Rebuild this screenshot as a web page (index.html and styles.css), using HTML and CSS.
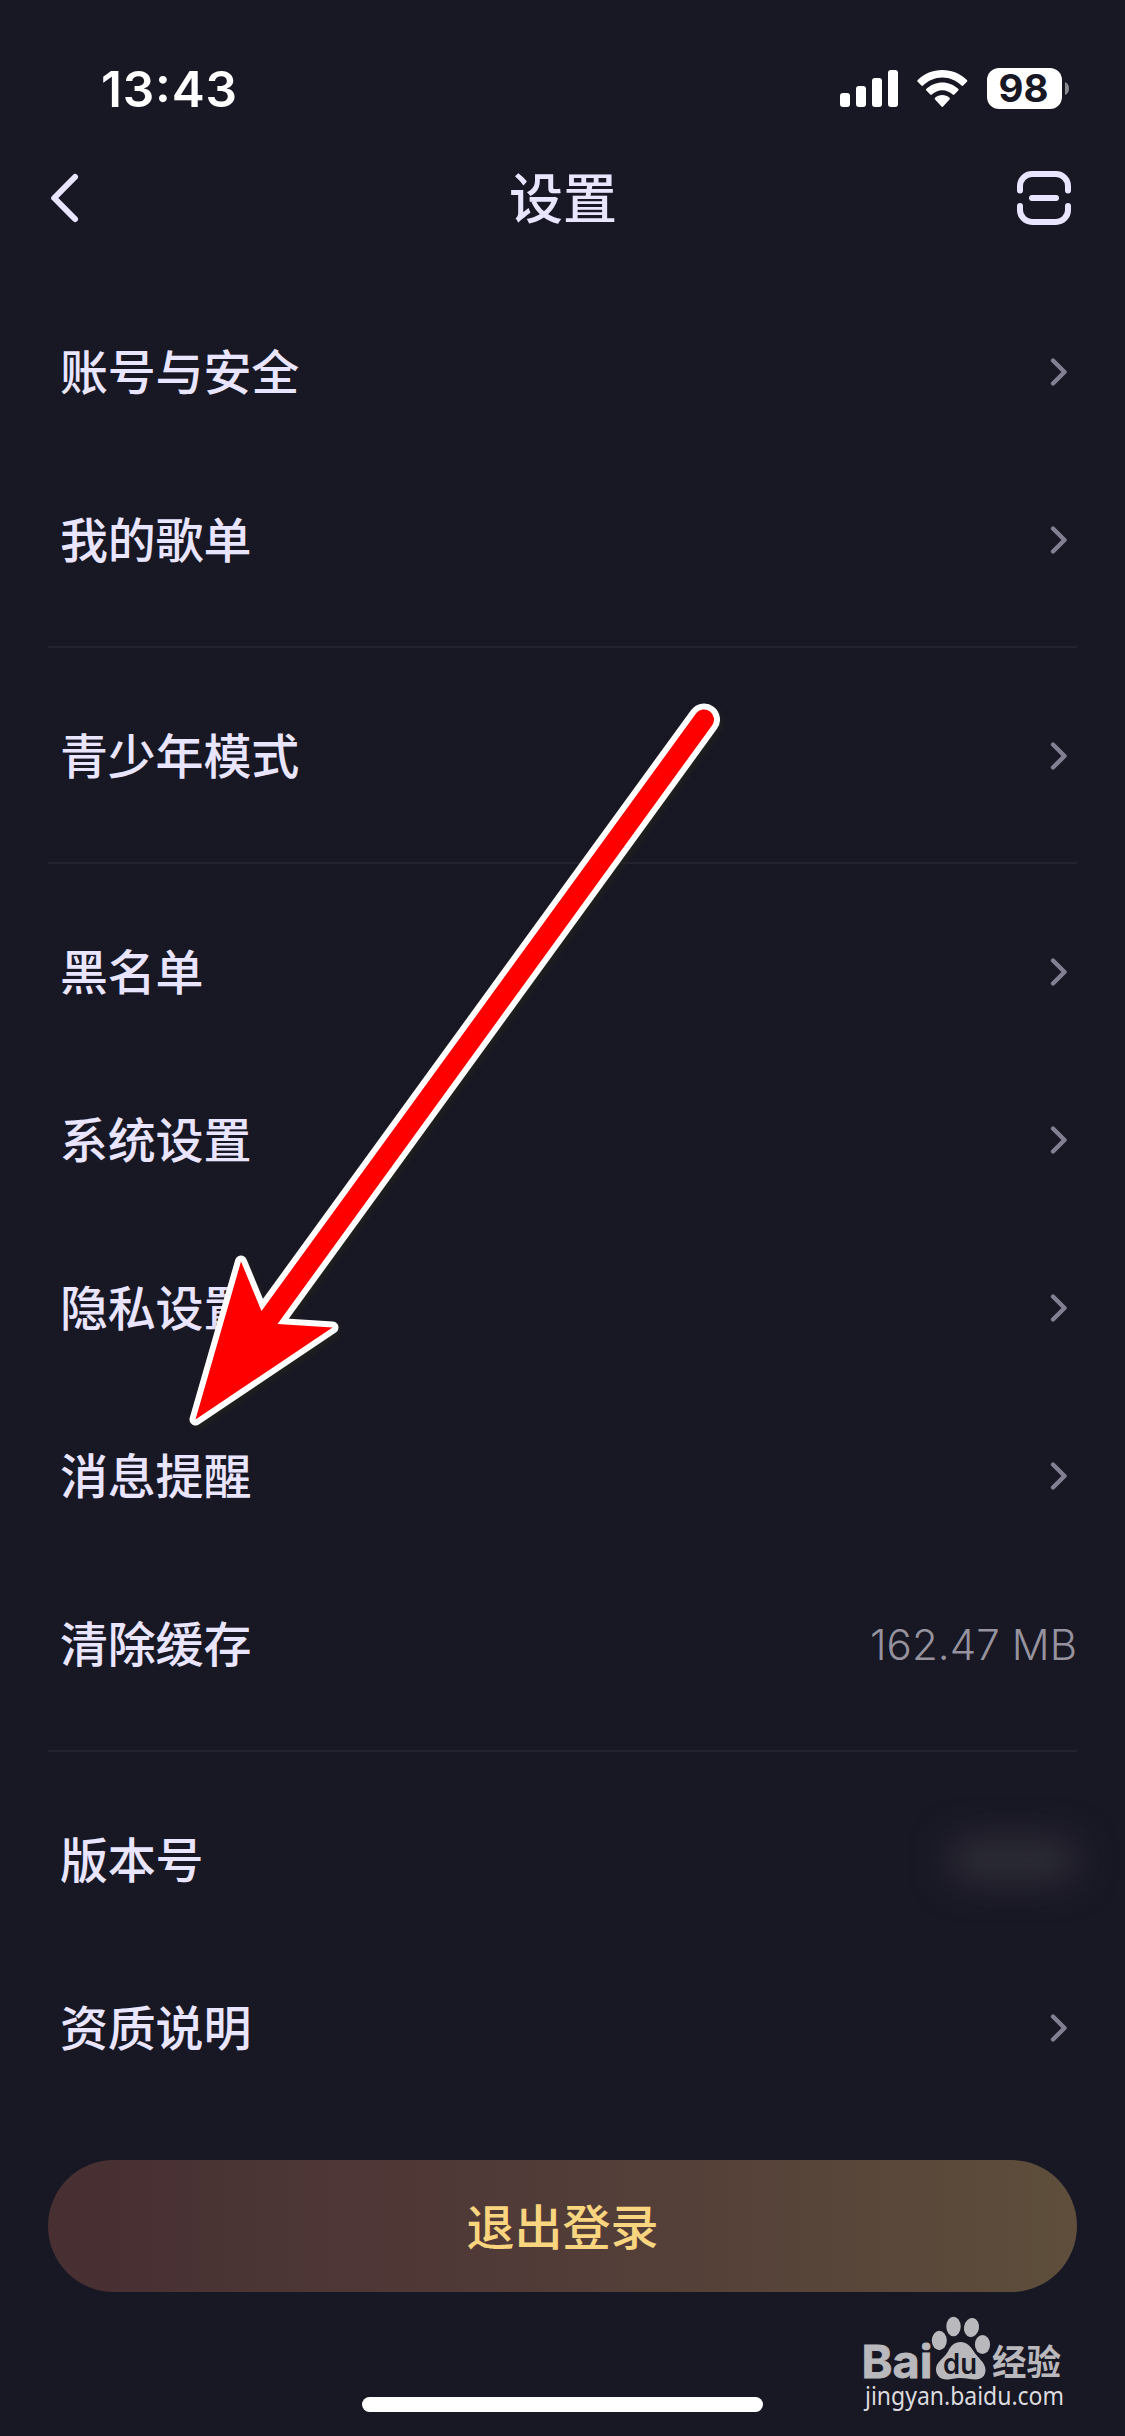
FILE: index.html
```html
<!DOCTYPE html>
<html lang="zh-CN">
<head>
<meta charset="utf-8">
<title>设置</title>
<link rel="stylesheet" href="styles.css">
</head>
<body>
<svg class="defs" width="0" height="0" aria-hidden="true">
  <symbol id="chevron" viewBox="0 0 18 30"><path d="M3 3.5 14.5 15 3 26.5" fill="none" stroke="#827f92" stroke-width="4.4" stroke-linecap="round" stroke-linejoin="round"/></symbol>
</svg>
<div class="screen">
  <div class="status">
    <svg class="time" width="150" height="70" viewBox="0 -10 150 70"><text x="0" y="43" textLength="136" lengthAdjust="spacing">13:43</text></svg>
    <svg class="indicators" width="230" height="42" viewBox="840 68 230 42" fill="#fff">
      <rect x="840" y="93" width="10" height="14" rx="3"/>
      <rect x="856" y="86" width="10" height="21" rx="3"/>
      <rect x="872" y="78" width="10" height="29" rx="3"/>
      <rect x="888" y="70" width="10" height="37" rx="3"/>
      <path d="M942.3 70c9.400 0 18.100 3.700 24.600 9.900.5.500.5 1.300 0 1.800l-3.700 3.800c-.5.500-1.200.5-1.700 0-5-4.800-11.800-7.900-19.200-7.900s-14.200 3.100-19.200 7.900c-.5.500-1.200.5-1.700 0l-3.700-3.800c-.5-.5-.5-1.300 0-1.800 6.500-6.200 15.200-9.900 24.600-9.900z"/>
      <path d="M942.300 82.500c6 0 11.600 2.400 15.900 6.300.5.500.5 1.300 0 1.800l-3.800 3.800c-.5.500-1.200.5-1.700.1-2.800-2.600-6.400-4.200-10.400-4.200s-7.600 1.600-10.400 4.200c-.5.400-1.200.4-1.700-.1l-3.800-3.800c-.5-.5-.5-1.300 0-1.800 4.300-3.900 9.900-6.300 15.900-6.300z"/>
      <path d="M942.300 95c2.700 0 5.200 1 7.200 2.700.5.500.5 1.300 0 1.800l-6.400 7c-.4.500-1.200.5-1.600 0l-6.400-7c-.5-.5-.5-1.300 0-1.800 2-1.700 4.500-2.700 7.200-2.700z"/>
      <rect x="987" y="68" width="75" height="41" rx="12"/>
      <path d="M1065 82c2.600 1 4 3.500 4 6.500s-1.400 5.500-4 6.500z" fill="#8b8b91"/>
      <text class="charge" x="998.500" y="102" textLength="50" lengthAdjust="spacingAndGlyphs">98</text>
    </svg>
  </div>
  <header class="nav">
    <svg width="54" height="54" viewBox="0 0 54 54"><path d="M27 6 6.200 27 27 48" class="line"/></svg>
    <h1 class="title">设置</h1>
    <svg width="54" height="54" viewBox="0 0 54 54"><path class="line" d="M3 19.500V15A12 12 0 0 1 15 3H39A12 12 0 0 1 51 15V19.500M3 35V39A12 12 0 0 0 15 51H39A12 12 0 0 0 51 39V35M15 27H39"/></svg>
  </header>
  <main class="list">
    <section class="group">
      <div class="row"><span class="label">账号与安全</span><svg class="chev"><use href="#chevron"/></svg></div>
      <div class="row"><span class="label">我的歌单</span><svg class="chev"><use href="#chevron"/></svg></div>
    </section>
    <section class="group">
      <div class="row"><span class="label">青少年模式</span><svg class="chev"><use href="#chevron"/></svg></div>
    </section>
    <section class="group">
      <div class="row"><span class="label">黑名单</span><svg class="chev"><use href="#chevron"/></svg></div>
      <div class="row"><span class="label">系统设置</span><svg class="chev"><use href="#chevron"/></svg></div>
      <div class="row"><span class="label">隐私设置</span><svg class="chev"><use href="#chevron"/></svg></div>
      <div class="row"><span class="label">消息提醒</span><svg class="chev"><use href="#chevron"/></svg></div>
      <div class="row"><span class="label">清除缓存</span><svg class="size" width="216" height="60" viewBox="-10 0 216 60"><text x="-1" y="46" textLength="207" lengthAdjust="spacing">162.47 MB</text></svg></div>
    </section>
    <section class="group">
      <div class="row"><span class="label">版本号</span><i class="masked"></i></div>
      <div class="row"><span class="label">资质说明</span><svg class="chev"><use href="#chevron"/></svg></div>
    </section>
  </main>
  <button class="logout">退出登录</button>
  <div class="home"></div>

  <svg class="arrow" width="580" height="760" viewBox="170 690 580 760">
    <path class="outline" d="M195.500 1419.500 241 1261.500 261.500 1311 696 713.500A10 10 0 0 1 712 725.500L277.500 1324 332.500 1327.500Z"/>
    <path fill="#f00" d="M195.500 1419.500 241 1261.500 261.500 1311 696 713.500A10 10 0 0 1 712 725.500L277.500 1324 332.500 1327.500Z"/>
  </svg>

  <svg class="watermark" width="210" height="110" viewBox="860 2312 210 110" fill="#b9b8bc">
    <text class="wm-bai" x="861.500" y="2378" textLength="71" lengthAdjust="spacingAndGlyphs">Bai</text>
    <ellipse cx="939.300" cy="2340.500" rx="7.500" ry="9.700"/>
    <ellipse cx="953.500" cy="2326.500" rx="7.200" ry="9.800"/>
    <ellipse cx="971.500" cy="2327.500" rx="7.500" ry="9.600" transform="rotate(10 971.500 2327.500)"/>
    <ellipse cx="982.500" cy="2344.500" rx="7.600" ry="9.500"/>
    <path d="M960.500 2342c6 0 10 4 13 9 4 7 12 11 12 19 0 6-4 9.500-10 9.500-5 0-9-1.500-15-1.500s-9 1.500-14 1.500c-6 0-10.500-4-10.500-10 0-8 8-11 12-18 3-6 6.500-9.500 12.500-9.500z"/>
    <text class="wm-du" x="943" y="2374" textLength="34" lengthAdjust="spacingAndGlyphs">du</text>
    <text class="wm-cn" x="992" y="2375" textLength="69" lengthAdjust="spacingAndGlyphs">经验</text>
    <text class="wm-url" x="865" y="2405" textLength="199" lengthAdjust="spacingAndGlyphs">jingyan.baidu.com</text>
  </svg>
</div>
</body>
</html>
```
FILE: styles.css
```css
* { box-sizing: border-box; }
body { margin: 0; background: #181724; }
.defs { display: block; height: 0; }
.screen {
  position: relative;
  display: flex;
  flex-direction: column;
  width: 1125px;
  height: 2436px;
  overflow: hidden;
  background: #181724;
  color: #e9e5ff;
  font-family: "Noto Sans CJK SC", sans-serif;
}
.status {
  display: flex;
  justify-content: space-between;
  align-items: flex-start;
  height: 144px;
  padding: 54px 55px 0 101px;
}
.indicators { margin-top: 14px; }
.time { fill: #fff; font: 600 49.500px Inter, sans-serif; }
.charge { fill: #181724; font: 700 38px Inter, sans-serif; }
.nav {
  display: flex;
  justify-content: space-between;
  align-items: center;
  height: 108px;
  padding: 0 54px 0 48px;
}
.title { margin: 0 0 0 7px; padding-bottom: 4px; font-size: 54px; font-weight: 500; line-height: 80px; }
.line { fill: none; stroke: #e9e5ff; stroke-width: 6; stroke-linecap: round; stroke-linejoin: round; }
.list { padding: 36px 48px 0; }
.group + .group { margin-top: 22px; border-top: 2px solid #24222f; padding-top: 24px; }
.row {
  display: flex;
  justify-content: space-between;
  align-items: center;
  height: 168px;
  padding-left: 12px;
  font-size: 48px;
  font-weight: 500;
  line-height: 72px;
}
.label { padding-bottom: 6px; letter-spacing: -.2px; }
.chev { width: 18px; height: 30px; margin-right: 9px; }
.size { fill: #96939e; font: 300 42px Inter, sans-serif; }
.masked {
  width: 128px;
  height: 38px;
  border-radius: 19px;
  background: #31313a;
  filter: blur(19px);
}
.logout {
  flex: none;
  margin: 48px 48px 0;
  height: 132px;
  padding: 0 0 4px;
  border: 0;
  border-radius: 66px;
  background: linear-gradient(90deg, #472f32, #523c38 50%, #5e4e3b);
  color: #fad57f;
  font: 500 48px/72px "Noto Sans CJK SC", sans-serif;
}
.home { flex: none; align-self: center; width: 401px; height: 15px; margin-top: 105px; border-radius: 8px; background: #fff; }
.arrow { position: absolute; left: 170px; top: 690px; }
.outline { fill: #fff; stroke: #fff; stroke-width: 12; stroke-linejoin: round; filter: drop-shadow(2px 3px 3px rgba(40, 45, 20, .5)); }
.watermark { position: absolute; left: 860px; top: 2312px; }
.wm-bai { font: 700 45px Inter, sans-serif; stroke: #b9b8bc; stroke-width: .8px; }
.wm-du { fill: #181724; font: 600 28px Inter, sans-serif; }
.wm-cn { font: 700 35px "Noto Sans CJK SC", sans-serif; }
.wm-url { fill: #dcdbdf; font: 400 25.500px "Noto Sans", sans-serif; }
```
